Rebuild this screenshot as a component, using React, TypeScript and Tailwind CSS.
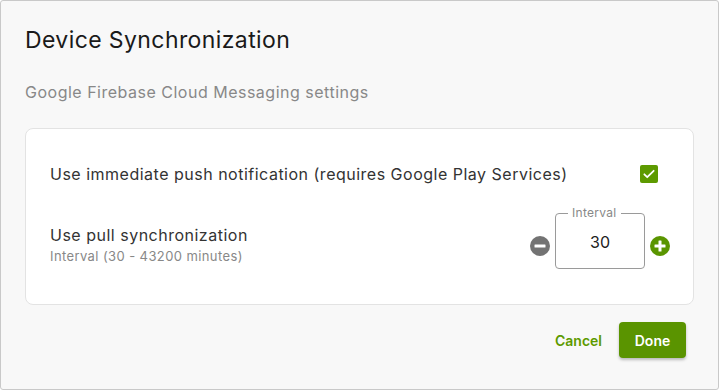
export default function App() {
  return (
    <div className="w-[720px] h-[391px] bg-white font-['Inter',sans-serif]">
      <div className="w-[719px] h-[390px] bg-[#f8f8f8] border border-[#c9c9c9] rounded-[3px] flex flex-col px-6">
        <h2 className="text-[23px] leading-7 text-[#1a1a1a] mt-[25px] tracking-[0.4px]">Device Synchronization</h2>
        <p className="text-[16px] leading-5 text-[#888888] mt-[28px] tracking-[0.5px]">Google Firebase Cloud Messaging settings</p>

        <div className="mt-[26px] bg-white border border-[#e3e3e3] rounded-lg h-[177px] flex flex-col pl-6 pr-[26px] pt-[25px]">
          <div className="flex items-center justify-between h-[40px]">
            <span className="text-[16px] text-[#333333] tracking-[0.5px]">
              Use immediate push notification (requires Google Play Services)
            </span>
            <span className="w-[18px] h-[18px] rounded-[2px] bg-[#5d9a00] flex items-center justify-center mr-[9px]">
              <svg width="14" height="14" viewBox="0 0 24 24" fill="none" stroke="white" strokeWidth="3" strokeLinecap="round" strokeLinejoin="round">
                <path d="M4 12.5l5 5L20 6.5" />
              </svg>
            </span>
          </div>

          <div className="flex items-center justify-between mt-[18px]">
            <div className="flex flex-col pt-[5px]">
              <span className="text-[16px] leading-6 text-[#333333] tracking-[0.5px]">Use pull synchronization</span>
              <span className="text-[13px] leading-4 text-[#888888] mt-[1px] tracking-[0.4px]">Interval (30 - 43200 minutes)</span>
            </div>
            <div className="flex items-center gap-[5px] mr-[-3px] mt-[1px]">
              <svg width="20" height="20" viewBox="0 0 20 20" className="mt-[9px]">
                <circle cx="10" cy="10" r="10" fill="#737373" />
                <rect x="4.5" y="8.5" width="11" height="3" rx="0.5" fill="white" />
              </svg>
              <div className="relative w-[90px] h-[56px] border border-[#9a9a9a] rounded-[4px] flex items-center justify-center">
                <span className="absolute -top-[8px] left-[12px] bg-white px-[4px] text-[12px] leading-[14px] text-[#888888] tracking-[0.3px]">
                  Interval
                </span>
                <span className="text-[16px] text-[#222222] mt-[1px]">30</span>
              </div>
              <svg width="20" height="20" viewBox="0 0 20 20" className="mt-[9px]">
                <circle cx="10" cy="10" r="10" fill="#5a9500" />
                <rect x="4.5" y="8.5" width="11" height="3" rx="0.5" fill="white" />
                <rect x="8.5" y="4.5" width="3" height="11" rx="0.5" fill="white" />
              </svg>
            </div>
          </div>
        </div>

        <div className="flex items-center justify-end gap-[17px] mt-[17px] pr-[8px]">
          <span className="text-[14px] font-semibold text-[#5d9a00]">Cancel</span>
          <span className="w-[67px] h-[36px] rounded-[4px] bg-[#5a9400] text-white text-[14px] font-semibold flex items-center justify-center shadow-[0_2px_3px_rgba(0,0,0,0.25)]">
            Done
          </span>
        </div>
      </div>
    </div>
  );
}
